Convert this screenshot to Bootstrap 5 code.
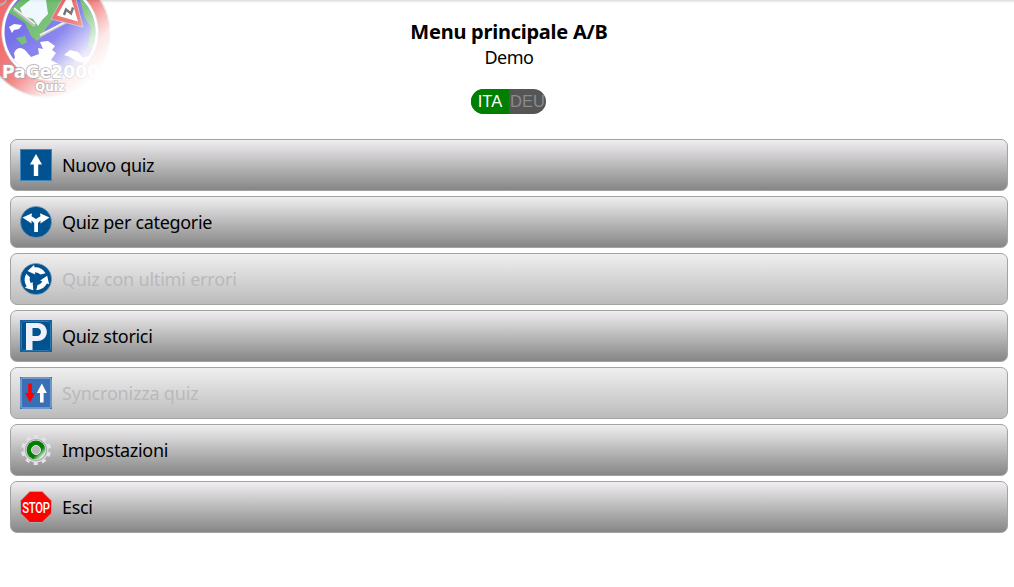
<!DOCTYPE html>
<html lang="it">
<head>
  <meta charset="UTF-8">
  <meta name="viewport" content="width=device-width, initial-scale=1.0">
  <title>Menu principale A/B</title>
  <link href="https://cdn.jsdelivr.net/npm/bootstrap@5.3.0/dist/css/bootstrap.min.css" rel="stylesheet">
  <style>
    body {
      font-family: "Noto Sans", "Open Sans", sans-serif;
      font-size: 18px;
      color: #000;
      background: linear-gradient(#dcdcdc, #fff 3px) no-repeat #fff;
      overflow: hidden;
    }
    .page {
      padding: 18px 6px 0 10px;
    }
    .logo {
      position: absolute;
      top: 0;
      left: 0;
    }
    .title {
      font-size: 20px;
      line-height: 28px;
      letter-spacing: -0.25px;
    }
    .subtitle {
      line-height: 22px;
      letter-spacing: -0.5px;
    }
    .lang-switch {
      width: 75px;
      height: 25px;
      margin: 21px 0 25px -1px;
      border-radius: 13px;
      background: #555;
      font: 16.5px/25px "Liberation Sans", sans-serif;
    }
    .lang-on {
      width: 38px;
      background: #008000;
      color: #fff;
    }
    .lang-off {
      width: 37px;
      color: #8a8a8a;
    }
    .menu {
      gap: 5px;
    }
    .menu-btn {
      height: 52px;
      padding: 0 9px;
      gap: 10px;
      font-size: 18px;
      letter-spacing: -0.32px;
      color: #000;
      border: 1px solid #a2a4a2;
      border-radius: 7px;
      background: linear-gradient(#f0eef0, #868686);
    }
    .menu-btn:disabled {
      opacity: 1;
      color: #b9b9bb;
      letter-spacing: -0.2px;
      border-color: #a2a4a2;
      background: linear-gradient(#f0eff0, #bbb);
    }
  </style>
</head>
<body>
<svg class="logo" width="116" height="104" viewBox="0 0 116 104">
  <defs>
    <linearGradient id="fade" gradientUnits="userSpaceOnUse" x1="28" y1="22" x2="88" y2="84">
      <stop offset="0" stop-color="#fff" stop-opacity=".64"/>
      <stop offset=".35" stop-color="#fff" stop-opacity=".54"/>
      <stop offset=".72" stop-color="#fff" stop-opacity=".1"/>
      <stop offset="1" stop-color="#fff" stop-opacity="0"/>
    </linearGradient>
    <mask id="fadeMask"><rect width="116" height="104" fill="url(#fade)"/></mask>
    <clipPath id="globe"><circle cx="50" cy="32" r="45.500"/></clipPath>
    <linearGradient id="textFade" gradientUnits="userSpaceOnUse" x1="38" y1="0" x2="96" y2="0">
      <stop offset="0" stop-color="#a9a5a5"/>
      <stop offset="1" stop-color="#fff"/>
    </linearGradient>
  </defs>
  <g mask="url(#fadeMask)">
    <circle cx="47" cy="34" r="64" fill="#bbb"/>
    <circle cx="47" cy="34" r="62.500" fill="#e81c1c"/>
    <circle cx="50" cy="32" r="48.500" fill="#fff" stroke="#999" stroke-width=".7"/>
    <circle cx="50" cy="32" r="45.500" fill="#2a22e0"/>
    <g clip-path="url(#globe)">
      <path d="M8 12L20 0H62L55 18 46 28 42 37 37 41 31 36 25 23 16 17Z" fill="#209820"/>
      <path d="M16 38L25 36 27 42 22 45Z" fill="#209820"/>
      <path d="M80 0H90L98 18 98 52 88 46 91 28 84 16Z" fill="#209820"/>
      <path d="M20 8L30 0H46L48 14 42 20 38 26 33 19 23 16Z" fill="#e8f4ff"/>
      <path d="M9 27L14 24 22 25 19 29 14 30 12 33Z" fill="#fff"/>
      <path d="M14 53Q18 45 25 50L31 57 39 54 38 48 43 49 40 42 48 41 55 46 52 50 56 53 51 60 62 66 61 80H5L2 58 10 61 15 58Z" fill="#fff"/>
      <path d="M64 55L70 50 78 52 83 58 94 54 92 64 76 61 70 57Z" fill="#fff"/>
      <path d="M14 9L35 26M40 36L68 21" stroke="#999" stroke-width="3"/>
      <path d="M14 8L35 24M40 35L67 21" stroke="#eee" stroke-width="1.500"/>
    </g>
    <path d="M51 19L66-8H74L83 27Z" fill="#e01010" stroke="#999" stroke-width="1"/>
    <path d="M57 15.500L67-2 71-2 78 21.500Z" fill="#fff"/>
    <path d="M64 15L66 9.500 71 13.500 73 7.500" fill="none" stroke="#111" stroke-width="2.400"/>
    <path d="M0 5Q7 3 6-2" fill="none" stroke="#888" stroke-width="2"/>
  </g>
  <g font-family="DejaVu Sans, sans-serif" font-weight="bold" fill="#fff" stroke="url(#textFade)" stroke-width="1.500" paint-order="stroke">
    <text x="2" y="78" font-size="18" textLength="97" lengthAdjust="spacingAndGlyphs">PaGe2000</text>
    <text x="35" y="91" font-size="12" textLength="30" lengthAdjust="spacingAndGlyphs">Quiz</text>
  </g>
</svg>

<main class="page">
  <header class="d-flex flex-column align-items-center text-center">
    <h1 class="title fw-bold m-0">Menu principale A/B</h1>
    <div class="subtitle">Demo</div>
    <div class="lang-switch d-flex overflow-hidden">
      <span class="lang-on">ITA</span>
      <span class="lang-off">DEU</span>
    </div>
  </header>

  <nav class="menu d-flex flex-column">
    <button class="btn menu-btn d-flex align-items-center">
      <svg width="32" height="32" viewBox="0 0 32 32">
        <rect x=".5" y=".5" width="31" height="31" fill="#005291" stroke="#3f86bd"/>
        <path d="M16 5L22 15.500H18.200V27H13.800V15.500H10Z" fill="#fff"/>
      </svg>
      <span>Nuovo quiz</span>
    </button>
    <button class="btn menu-btn d-flex align-items-center">
      <svg width="32" height="32" viewBox="0 0 32 32">
        <circle cx="16" cy="16" r="15.600" fill="#005291" stroke="#7d9db5" stroke-width=".7"/>
        <path d="M2.500 11.500L12 7.200 11.500 10.200 16 13 20.500 10.200 20 7.200 29.500 11.500 20.500 17.500 20.500 14.500 18 17V26H14.200V17L11.500 14.500 11.500 17.500Z" fill="#fff"/>
      </svg>
      <span>Quiz per categorie</span>
    </button>
    <button class="btn menu-btn d-flex align-items-center" disabled>
      <svg width="32" height="32" viewBox="0 0 32 32">
        <defs>
          <path id="roundArrow" d="M7.500 8L14 2 14.500 4.300Q21.500 3.800 25.500 10.200L20.500 11.600Q18.500 9.300 15 9.200L15.200 11.600Z" fill="#fff"/>
        </defs>
        <circle cx="16" cy="16" r="15.600" fill="#005291" stroke="#7d9db5" stroke-width=".7"/>
        <use href="#roundArrow"/>
        <use href="#roundArrow" transform="rotate(120 16 16)"/>
        <use href="#roundArrow" transform="rotate(240 16 16)"/>
      </svg>
      <span>Quiz con ultimi errori</span>
    </button>
    <button class="btn menu-btn d-flex align-items-center">
      <svg width="32" height="32" viewBox="0 0 32 32">
        <rect x=".5" y=".5" width="31" height="31" fill="#005291" stroke="#1b6199"/>
        <rect x="1.500" y="1.500" width="29" height="29" rx="2" fill="none" stroke="#3f86bd" stroke-width=".7"/>
        <path fill-rule="evenodd" d="M6 3H17.500C30 3 30 21 17.500 21H12.500V30H6ZM12.500 8V16H17C22.300 16 22.300 8 17 8Z" fill="#f0f0fa"/>
      </svg>
      <span>Quiz storici</span>
    </button>
    <button class="btn menu-btn d-flex align-items-center" disabled>
      <svg width="32" height="32" viewBox="0 0 32 32">
        <rect width="32" height="32" fill="#3a6fb5"/>
        <rect x="1" y="1" width="30" height="30" rx="1.500" fill="none" stroke="#9fc0e5"/>
        <path d="M8.200 6.500H11.800V16H15L10 25.500 5 16H8.200Z" fill="#f00"/>
        <path d="M21.800 6.500L26.800 16H23.600V25.500H20V16H16.800Z" fill="#fff"/>
      </svg>
      <span>Syncronizza quiz</span>
    </button>
    <button class="btn menu-btn d-flex align-items-center">
      <svg width="32" height="32" viewBox="0 0 32 32">
        <defs>
          <linearGradient id="gearGreen" x1="0" y1="0" x2="1" y2="1">
            <stop offset=".62" stop-color="#008000"/>
            <stop offset=".86" stop-color="#f4faf4"/>
          </linearGradient>
        </defs>
        <circle cx="16" cy="16" r="13.200" fill="none" stroke="#e2e2e4" stroke-width="3.600" stroke-dasharray="4.200 4.094" stroke-dashoffset="2.100" transform="rotate(-90 16 16)"/>
        <circle cx="16" cy="16" r="12.400" fill="#dededf"/>
        <circle cx="16" cy="16" r="10.500" fill="#eee" stroke="#aaa9b2" stroke-width="1.200"/>
        <circle cx="16" cy="16" r="9.400" fill="url(#gearGreen)"/>
        <circle cx="16" cy="16" r="4.500" fill="#bababa" stroke="#e4e4e4" stroke-width="1"/>
      </svg>
      <span>Impostazioni</span>
    </button>
    <button class="btn menu-btn d-flex align-items-center">
      <svg class="overflow-visible" width="32" height="32" viewBox="0 0 32 32">
        <path d="M9.800.5H22.200L31.500 9.800V22.200L22.200 31.500H9.800L.5 22.200V9.800Z" fill="#f00" stroke="#aaa"/>
        <text x="2.200" y="21.500" font-family="Roboto, sans-serif" font-weight="500" font-size="15" textLength="27.500" lengthAdjust="spacingAndGlyphs" fill="#fff">STOP</text>
      </svg>
      <span>Esci</span>
    </button>
  </nav>
</main>

<script src="https://cdn.jsdelivr.net/npm/bootstrap@5.3.0/dist/js/bootstrap.bundle.min.js"></script>
</body>
</html>
